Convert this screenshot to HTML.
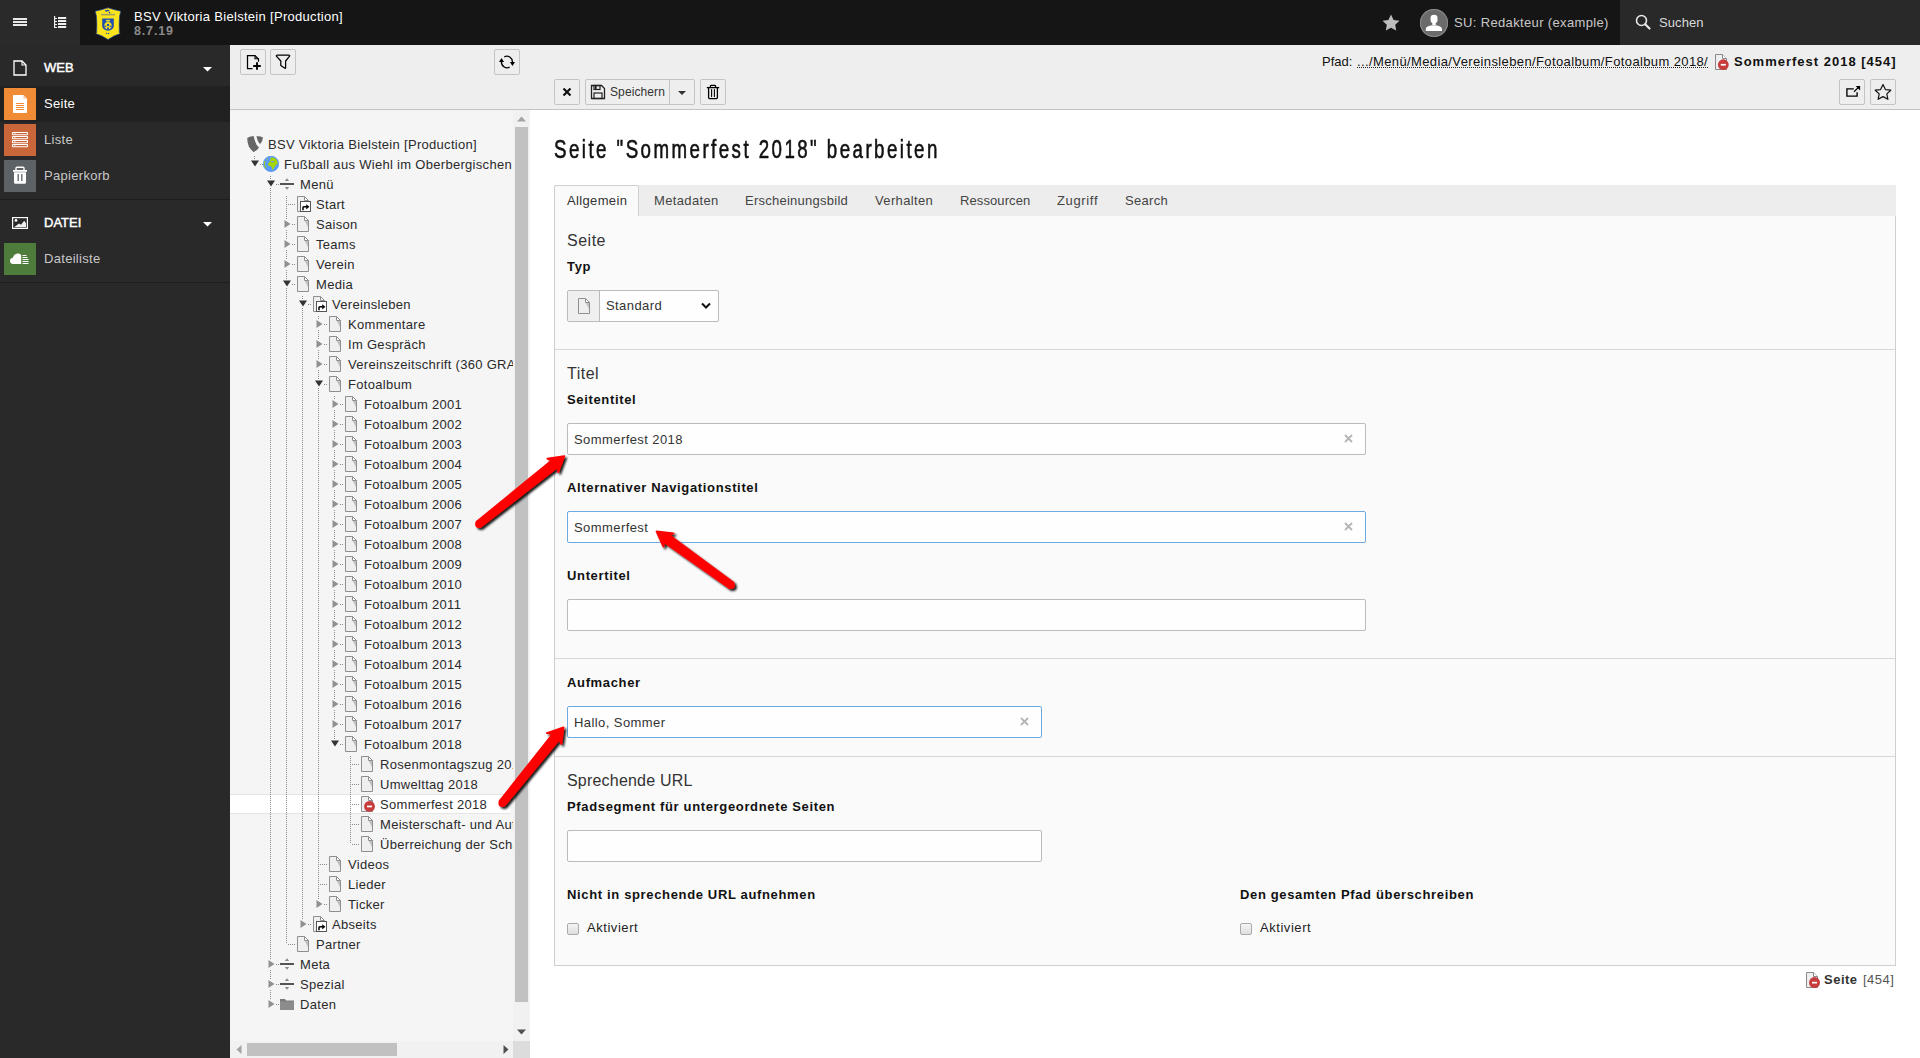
<!DOCTYPE html><html><head><meta charset="utf-8"><title>TYPO3</title><style>
*{box-sizing:border-box}
html,body{margin:0;padding:0;width:1920px;height:1058px;overflow:hidden;background:#fff;font-family:"Liberation Sans", sans-serif;color:#212121}
.abs{position:absolute}
.t{position:absolute;white-space:nowrap;line-height:1}
.btn{position:absolute;background:#eeeeee;border:1px solid #c4c4c4;border-radius:2px}
.dv{position:absolute;width:1px;background-image:linear-gradient(#8a8a8a 50%,transparent 50%);background-size:1px 2px}
.dh{position:absolute;height:1px;background-image:linear-gradient(90deg,#8a8a8a 50%,transparent 50%);background-size:2px 1px}
.tr{position:absolute;white-space:nowrap;font-size:13px;letter-spacing:0.3px;line-height:20px;height:20px;color:#2a2a2a}
.lbl{position:absolute;white-space:nowrap;font-size:13px;font-weight:bold;letter-spacing:0.65px;margin-top:-1px;color:#111;line-height:1}
.inp{position:absolute;background:#fefefe;border:1px solid #bbb;border-radius:2px}
.inp.blue{border-color:#6daae0}
.itx{position:absolute;white-space:nowrap;font-size:13px;letter-spacing:0.42px;color:#333;line-height:1}
.clr{position:absolute;width:9px;height:9px}
.sec{position:absolute;white-space:nowrap;font-size:16px;letter-spacing:0.5px;color:#333;line-height:1}

</style></head><body>
<div class="abs" style="left:0;top:0;width:1920px;height:45px;background:#151515"></div>
<div class="abs" style="left:0;top:0;width:80px;height:45px;background:#2a2a2a"></div>
<div class="abs" style="left:13px;top:18px;width:14px;height:2px;background:#e8e8e8"></div>
<div class="abs" style="left:13px;top:21px;width:14px;height:2px;background:#e8e8e8"></div>
<div class="abs" style="left:13px;top:24px;width:14px;height:2px;background:#e8e8e8"></div>
<svg class="abs" style="left:50px;top:12px" width="20" height="20" viewBox="0 0 20 20"><g fill="#f0f0f0"><rect x="4" y="4" width="1.2" height="12"/><rect x="5" y="6" width="2" height="1"/><rect x="5" y="9" width="2" height="1"/><rect x="5" y="12" width="2" height="1"/><rect x="5" y="15" width="2" height="1"/><rect x="8" y="5" width="8.2" height="2"/><rect x="8" y="8" width="8.2" height="2"/><rect x="8" y="11" width="8.2" height="2"/><rect x="8" y="14" width="8.2" height="2"/></g></svg>
<svg class="abs" style="left:90px;top:4px" width="36" height="38" viewBox="0 0 36 38"><path d="M5.2 7.2L12 5.6 18 3.8 24 5.6 30.8 7.2 29.6 12 29.2 20 29.4 28.6 30.2 29.6 24 32 18 35.6 12 32 5.8 29.6 6.6 28.6 6.8 20 6.4 12Z" fill="#fce51c" stroke="#1c3f96" stroke-width="0.7"/><path d="M11 10.6h14" stroke="#a8a060" stroke-width="1.6"/><path d="M15 6.6l1.6 .4 1.2-.8 1.4.6M19.4 8.6" stroke="#1f4fb0" stroke-width="1.3" fill="none"/><circle cx="19.5" cy="8.6" r="0.8" fill="#1f4fb0"/><path d="M12.2 14.6L23.8 14.6 23.8 22C23.8 24.6 21 26.2 18 26.8 15 26.2 12.2 24.6 12.2 22Z" fill="#1f4fb0"/><path d="M16 15.2l.8 1.4 1.2-1.2 1.2 1.2.8-1.4v2.2h-4z" fill="#fce51c"/><circle cx="18" cy="21.6" r="3.6" fill="#fce51c"/><circle cx="18" cy="21" r="1.2" fill="#1f4fb0"/><circle cx="18" cy="24.2" r="1" fill="#1f4fb0"/><circle cx="15.6" cy="22.2" r="0.8" fill="#1f4fb0"/><circle cx="20.4" cy="22.2" r="0.8" fill="#1f4fb0"/><circle cx="16.6" cy="29.4" r="0.7" fill="#1f4fb0"/><circle cx="18.6" cy="29.4" r="0.7" fill="#1f4fb0"/></svg>
<div class="t" style="left:134px;top:10px;font-size:13px;letter-spacing:0.3px;color:#fff">BSV Viktoria Bielstein [Production]</div>
<div class="t" style="left:134px;top:25px;font-size:12.5px;letter-spacing:0.85px;color:#8a8a8a;font-weight:bold">8.7.19</div>
<svg class="abs" style="left:1382px;top:14px" width="18" height="17" viewBox="0 0 18 17"><path d="M9 0.5l2.6 5.4 5.9.8-4.3 4.1 1 5.8L9 13.8 3.8 16.6l1-5.8L.5 6.7l5.9-.8z" fill="#bdbdbd"/></svg>
<div class="abs" style="left:1420px;top:9px;width:28px;height:28px;border-radius:50%;background:#6b6b6b;box-shadow:inset 0 0 0 1px #8a8a8a;overflow:hidden"><svg width="28" height="28" viewBox="0 0 28 28"><path d="M10.6 9Q10.6 5.8 14 5.8Q17.5 5.8 17.5 9V11Q17.5 14.2 14 14.2Q10.6 14.2 10.6 11Z" fill="#fff"/><rect x="12.3" y="13.4" width="3.4" height="3.2" fill="#fff"/><path d="M5.8 21.9V20Q5.8 17.8 9 17L12 16.3Q14 17.6 16 16.3L19 17Q22 17.8 22 20V21.9Z" fill="#fff"/></svg></div>
<div class="t" style="left:1454px;top:16px;font-size:13px;letter-spacing:0.35px;color:#c8c8c8">SU: Redakteur (example)</div>
<div class="abs" style="left:1620px;top:0;width:300px;height:45px;background:#292929"></div>
<svg class="abs" style="left:1635px;top:14px" width="16" height="16" viewBox="0 0 16 16"><circle cx="6.5" cy="6.5" r="5" fill="none" stroke="#e8e8e8" stroke-width="1.6"/><path d="M10.2 10.2l4.3 4.3" stroke="#e8e8e8" stroke-width="2.2" stroke-linecap="round"/></svg>
<div class="t" style="left:1659px;top:16px;font-size:13px;letter-spacing:0.1px;color:#dadada">Suchen</div>
<div class="abs" style="left:0;top:45px;width:230px;height:1013px;background:#292929"></div>
<svg class="abs" style="left:13px;top:60px" width="14" height="16" viewBox="0 0 14 16"><path d="M1 1h8l4 4v10H1z" fill="none" stroke="#fff" stroke-width="1.3"/><path d="M9 1v4h4" fill="none" stroke="#fff" stroke-width="1.1"/></svg>
<div class="t" style="left:44px;top:61px;font-size:13px;color:#fff;-webkit-text-stroke:0.45px #fff">WEB</div>
<svg class="abs" style="left:203px;top:67px" width="9" height="5" viewBox="0 0 9 5"><path d="M0 0h9L4.5 4.5z" fill="#fff"/></svg>
<div class="abs" style="left:0;top:86px;width:230px;height:36px;background:#212121"></div>
<div class="abs" style="left:4px;top:88px;width:32px;height:32px;background:#f28b36"><svg width="32" height="32" viewBox="0 0 32 32"><path d="M9 7h10.5l3.5 3.5V25H9z" fill="#fff"/><path d="M19.5 7v3.5H23z" fill="#f7c49a"/><path d="M12 15.5h8M12 17.5h8M12 19.5h8M12 21.5h8" stroke="#f28b36" stroke-width="1"/></svg></div>
<div class="t" style="left:44px;top:97px;font-size:13px;color:#fff;letter-spacing:0.3px">Seite</div>
<div class="abs" style="left:4px;top:124px;width:32px;height:32px;background:#c9663a"><svg width="32" height="32" viewBox="0 0 32 32"><g fill="none" stroke="#fff" stroke-width="1.1"><rect x="8.5" y="8.5" width="15" height="2.2" rx="0.5"/><rect x="8.5" y="12.5" width="15" height="2.2" rx="0.5"/><rect x="8.5" y="16.5" width="15" height="2.2" rx="0.5"/><rect x="8.5" y="20.5" width="15" height="2.2" rx="0.5"/></g><path d="M10.5 9.6h.8M10.5 13.6h.8M10.5 17.6h.8M10.5 21.6h.8" stroke="#fff" stroke-width="1.2"/></svg></div>
<div class="t" style="left:44px;top:133px;font-size:13px;color:#c8c8c8;letter-spacing:0.3px">Liste</div>
<div class="abs" style="left:4px;top:160px;width:32px;height:32px;background:#5c6265"><svg width="32" height="32" viewBox="0 0 32 32"><path d="M12 10.5v-2.2q0-1 1-1h6q1 0 1 1v2.2" fill="none" stroke="#fff" stroke-width="1.4"/><rect x="9" y="10" width="14" height="1.8" fill="#fff"/><path d="M10 12.2h12V22.5q0 1.3-1.3 1.3h-9.4q-1.3 0-1.3-1.3z" fill="#fff"/><path d="M14.2 14v7M17.8 14v7" stroke="#5c6265" stroke-width="1.3"/></svg></div>
<div class="t" style="left:44px;top:169px;font-size:13px;color:#c8c8c8;letter-spacing:0.3px">Papierkorb</div>
<div class="abs" style="left:0;top:199px;width:230px;height:1px;background:#1e1e1e"></div>
<svg class="abs" style="left:12px;top:217px" width="16" height="12" viewBox="0 0 16 12"><rect x="0.6" y="0.6" width="14.8" height="10.8" fill="none" stroke="#fff" stroke-width="1.2"/><path d="M2 10.2L7 6.5 9 7.8 12.2 3.8 14 6.2V10.2z" fill="#eee"/><circle cx="4" cy="3.4" r="1.4" fill="#fff"/></svg>
<div class="t" style="left:44px;top:216px;font-size:13px;color:#fff;-webkit-text-stroke:0.45px #fff">DATEI</div>
<svg class="abs" style="left:203px;top:222px" width="9" height="5" viewBox="0 0 9 5"><path d="M0 0h9L4.5 4.5z" fill="#fff"/></svg>
<div class="abs" style="left:4px;top:243px;width:32px;height:32px;background:#4e7d3b"><svg width="32" height="32" viewBox="0 0 32 32" style="margin-top:-1.5px"><path d="M9 22c-2 0-3-1.6-3-3.2 0-1.8 1.4-3 3-3 .4-2.6 2.4-4.3 4.8-4.3 1.6 0 2.8.7 3.4 1.6V22z" fill="#fff"/><path d="M18.5 13.5h4M18.5 15.5h5M18.5 17.5h6M18.5 19.5h6M18.5 21.5h6" stroke="#fff" stroke-width="1"/></svg></div>
<div class="t" style="left:44px;top:252px;font-size:13px;color:#c8c8c8;letter-spacing:0.3px">Dateiliste</div>
<div class="abs" style="left:0;top:282px;width:230px;height:1px;background:#1e1e1e"></div>
<div class="abs" style="left:230px;top:45px;width:300px;height:64px;background:#eeeeee;border-bottom:1px solid #c3c3c3;height:65px"></div>
<div class="btn" style="left:240px;top:49px;width:26px;height:26px"><svg width="24" height="24" viewBox="0 0 24 24" style="position:absolute;left:0;top:0"><path d="M11.5 18.5H6.5V5.5H14L17.5 9V11.8" fill="none" stroke="#000" stroke-width="1.25"/><path d="M14 5.5V8.8H17.5" fill="none" stroke="#000" stroke-width="1.1"/><path d="M16 12.2V19.8M12.2 16H19.8" stroke="#000" stroke-width="1.9"/></svg></div>
<div class="btn" style="left:270px;top:49px;width:26px;height:26px"><svg width="24" height="24" viewBox="0 0 24 24" style="position:absolute;left:0;top:0"><path d="M5.4 6.1Q5 5.2 6.2 5.2H17.8Q19 5.2 18.6 6.1L14.6 11V17.8Q14.6 18.6 13.9 18.2L9.8 15.4V11Z" fill="none" stroke="#000" stroke-width="1.25" stroke-linejoin="round"/></svg></div>
<div class="btn" style="left:494px;top:49px;width:26px;height:26px"><svg width="24" height="24" viewBox="0 0 24 24" style="position:absolute;left:0;top:0"><path d="M9.3 6.8A5.6 5.6 0 0 1 17.4 12.4" fill="none" stroke="#000" stroke-width="1.35"/><path d="M14.9 12.1H20L17.45 16Z" fill="#000"/><path d="M14.6 17.2A5.6 5.6 0 0 1 6.5 11.6" fill="none" stroke="#000" stroke-width="1.35"/><path d="M4 11.9H9L6.5 8Z" fill="#000"/></svg></div>
<div class="abs" style="left:230px;top:110px;width:283px;height:931px;background:#f5f5f5;overflow:hidden">
<div class="abs" style="left:0;top:684px;width:280px;height:20px;background:#fff;border-top:1px solid #e5e5e5;border-bottom:1px solid #e5e5e5"></div>
<div class="dv" style="left:24px;top:46px;height:8px"></div>
<div class="dh" style="left:26px;top:54px;width:8px"></div>
<div class="dv" style="left:40px;top:66px;height:18px"></div>
<div class="dh" style="left:42px;top:74px;width:8px"></div>
<div class="dv" style="left:56px;top:86px;height:18px"></div>
<div class="dh" style="left:58px;top:94px;width:8px"></div>
<div class="dv" style="left:40px;top:84px;height:20px"></div>
<div class="dv" style="left:56px;top:104px;height:20px"></div>
<div class="dh" style="left:58px;top:114px;width:8px"></div>
<div class="dv" style="left:40px;top:104px;height:20px"></div>
<div class="dv" style="left:56px;top:124px;height:20px"></div>
<div class="dh" style="left:58px;top:134px;width:8px"></div>
<div class="dv" style="left:40px;top:124px;height:20px"></div>
<div class="dv" style="left:56px;top:144px;height:20px"></div>
<div class="dh" style="left:58px;top:154px;width:8px"></div>
<div class="dv" style="left:40px;top:144px;height:20px"></div>
<div class="dv" style="left:56px;top:164px;height:20px"></div>
<div class="dh" style="left:58px;top:174px;width:8px"></div>
<div class="dv" style="left:40px;top:164px;height:20px"></div>
<div class="dv" style="left:72px;top:186px;height:18px"></div>
<div class="dh" style="left:74px;top:194px;width:8px"></div>
<div class="dv" style="left:56px;top:184px;height:20px"></div>
<div class="dv" style="left:40px;top:184px;height:20px"></div>
<div class="dv" style="left:88px;top:206px;height:18px"></div>
<div class="dh" style="left:90px;top:214px;width:8px"></div>
<div class="dv" style="left:72px;top:204px;height:20px"></div>
<div class="dv" style="left:56px;top:204px;height:20px"></div>
<div class="dv" style="left:40px;top:204px;height:20px"></div>
<div class="dv" style="left:88px;top:224px;height:20px"></div>
<div class="dh" style="left:90px;top:234px;width:8px"></div>
<div class="dv" style="left:72px;top:224px;height:20px"></div>
<div class="dv" style="left:56px;top:224px;height:20px"></div>
<div class="dv" style="left:40px;top:224px;height:20px"></div>
<div class="dv" style="left:88px;top:244px;height:20px"></div>
<div class="dh" style="left:90px;top:254px;width:8px"></div>
<div class="dv" style="left:72px;top:244px;height:20px"></div>
<div class="dv" style="left:56px;top:244px;height:20px"></div>
<div class="dv" style="left:40px;top:244px;height:20px"></div>
<div class="dv" style="left:88px;top:264px;height:20px"></div>
<div class="dh" style="left:90px;top:274px;width:8px"></div>
<div class="dv" style="left:72px;top:264px;height:20px"></div>
<div class="dv" style="left:56px;top:264px;height:20px"></div>
<div class="dv" style="left:40px;top:264px;height:20px"></div>
<div class="dv" style="left:104px;top:286px;height:18px"></div>
<div class="dh" style="left:106px;top:294px;width:8px"></div>
<div class="dv" style="left:88px;top:284px;height:20px"></div>
<div class="dv" style="left:72px;top:284px;height:20px"></div>
<div class="dv" style="left:56px;top:284px;height:20px"></div>
<div class="dv" style="left:40px;top:284px;height:20px"></div>
<div class="dv" style="left:104px;top:304px;height:20px"></div>
<div class="dh" style="left:106px;top:314px;width:8px"></div>
<div class="dv" style="left:88px;top:304px;height:20px"></div>
<div class="dv" style="left:72px;top:304px;height:20px"></div>
<div class="dv" style="left:56px;top:304px;height:20px"></div>
<div class="dv" style="left:40px;top:304px;height:20px"></div>
<div class="dv" style="left:104px;top:324px;height:20px"></div>
<div class="dh" style="left:106px;top:334px;width:8px"></div>
<div class="dv" style="left:88px;top:324px;height:20px"></div>
<div class="dv" style="left:72px;top:324px;height:20px"></div>
<div class="dv" style="left:56px;top:324px;height:20px"></div>
<div class="dv" style="left:40px;top:324px;height:20px"></div>
<div class="dv" style="left:104px;top:344px;height:20px"></div>
<div class="dh" style="left:106px;top:354px;width:8px"></div>
<div class="dv" style="left:88px;top:344px;height:20px"></div>
<div class="dv" style="left:72px;top:344px;height:20px"></div>
<div class="dv" style="left:56px;top:344px;height:20px"></div>
<div class="dv" style="left:40px;top:344px;height:20px"></div>
<div class="dv" style="left:104px;top:364px;height:20px"></div>
<div class="dh" style="left:106px;top:374px;width:8px"></div>
<div class="dv" style="left:88px;top:364px;height:20px"></div>
<div class="dv" style="left:72px;top:364px;height:20px"></div>
<div class="dv" style="left:56px;top:364px;height:20px"></div>
<div class="dv" style="left:40px;top:364px;height:20px"></div>
<div class="dv" style="left:104px;top:384px;height:20px"></div>
<div class="dh" style="left:106px;top:394px;width:8px"></div>
<div class="dv" style="left:88px;top:384px;height:20px"></div>
<div class="dv" style="left:72px;top:384px;height:20px"></div>
<div class="dv" style="left:56px;top:384px;height:20px"></div>
<div class="dv" style="left:40px;top:384px;height:20px"></div>
<div class="dv" style="left:104px;top:404px;height:20px"></div>
<div class="dh" style="left:106px;top:414px;width:8px"></div>
<div class="dv" style="left:88px;top:404px;height:20px"></div>
<div class="dv" style="left:72px;top:404px;height:20px"></div>
<div class="dv" style="left:56px;top:404px;height:20px"></div>
<div class="dv" style="left:40px;top:404px;height:20px"></div>
<div class="dv" style="left:104px;top:424px;height:20px"></div>
<div class="dh" style="left:106px;top:434px;width:8px"></div>
<div class="dv" style="left:88px;top:424px;height:20px"></div>
<div class="dv" style="left:72px;top:424px;height:20px"></div>
<div class="dv" style="left:56px;top:424px;height:20px"></div>
<div class="dv" style="left:40px;top:424px;height:20px"></div>
<div class="dv" style="left:104px;top:444px;height:20px"></div>
<div class="dh" style="left:106px;top:454px;width:8px"></div>
<div class="dv" style="left:88px;top:444px;height:20px"></div>
<div class="dv" style="left:72px;top:444px;height:20px"></div>
<div class="dv" style="left:56px;top:444px;height:20px"></div>
<div class="dv" style="left:40px;top:444px;height:20px"></div>
<div class="dv" style="left:104px;top:464px;height:20px"></div>
<div class="dh" style="left:106px;top:474px;width:8px"></div>
<div class="dv" style="left:88px;top:464px;height:20px"></div>
<div class="dv" style="left:72px;top:464px;height:20px"></div>
<div class="dv" style="left:56px;top:464px;height:20px"></div>
<div class="dv" style="left:40px;top:464px;height:20px"></div>
<div class="dv" style="left:104px;top:484px;height:20px"></div>
<div class="dh" style="left:106px;top:494px;width:8px"></div>
<div class="dv" style="left:88px;top:484px;height:20px"></div>
<div class="dv" style="left:72px;top:484px;height:20px"></div>
<div class="dv" style="left:56px;top:484px;height:20px"></div>
<div class="dv" style="left:40px;top:484px;height:20px"></div>
<div class="dv" style="left:104px;top:504px;height:20px"></div>
<div class="dh" style="left:106px;top:514px;width:8px"></div>
<div class="dv" style="left:88px;top:504px;height:20px"></div>
<div class="dv" style="left:72px;top:504px;height:20px"></div>
<div class="dv" style="left:56px;top:504px;height:20px"></div>
<div class="dv" style="left:40px;top:504px;height:20px"></div>
<div class="dv" style="left:104px;top:524px;height:20px"></div>
<div class="dh" style="left:106px;top:534px;width:8px"></div>
<div class="dv" style="left:88px;top:524px;height:20px"></div>
<div class="dv" style="left:72px;top:524px;height:20px"></div>
<div class="dv" style="left:56px;top:524px;height:20px"></div>
<div class="dv" style="left:40px;top:524px;height:20px"></div>
<div class="dv" style="left:104px;top:544px;height:20px"></div>
<div class="dh" style="left:106px;top:554px;width:8px"></div>
<div class="dv" style="left:88px;top:544px;height:20px"></div>
<div class="dv" style="left:72px;top:544px;height:20px"></div>
<div class="dv" style="left:56px;top:544px;height:20px"></div>
<div class="dv" style="left:40px;top:544px;height:20px"></div>
<div class="dv" style="left:104px;top:564px;height:20px"></div>
<div class="dh" style="left:106px;top:574px;width:8px"></div>
<div class="dv" style="left:88px;top:564px;height:20px"></div>
<div class="dv" style="left:72px;top:564px;height:20px"></div>
<div class="dv" style="left:56px;top:564px;height:20px"></div>
<div class="dv" style="left:40px;top:564px;height:20px"></div>
<div class="dv" style="left:104px;top:584px;height:20px"></div>
<div class="dh" style="left:106px;top:594px;width:8px"></div>
<div class="dv" style="left:88px;top:584px;height:20px"></div>
<div class="dv" style="left:72px;top:584px;height:20px"></div>
<div class="dv" style="left:56px;top:584px;height:20px"></div>
<div class="dv" style="left:40px;top:584px;height:20px"></div>
<div class="dv" style="left:104px;top:604px;height:20px"></div>
<div class="dh" style="left:106px;top:614px;width:8px"></div>
<div class="dv" style="left:88px;top:604px;height:20px"></div>
<div class="dv" style="left:72px;top:604px;height:20px"></div>
<div class="dv" style="left:56px;top:604px;height:20px"></div>
<div class="dv" style="left:40px;top:604px;height:20px"></div>
<div class="dv" style="left:104px;top:624px;height:10px"></div>
<div class="dh" style="left:106px;top:634px;width:8px"></div>
<div class="dv" style="left:88px;top:624px;height:20px"></div>
<div class="dv" style="left:72px;top:624px;height:20px"></div>
<div class="dv" style="left:56px;top:624px;height:20px"></div>
<div class="dv" style="left:40px;top:624px;height:20px"></div>
<div class="dv" style="left:120px;top:646px;height:18px"></div>
<div class="dh" style="left:122px;top:654px;width:8px"></div>
<div class="dv" style="left:88px;top:644px;height:20px"></div>
<div class="dv" style="left:72px;top:644px;height:20px"></div>
<div class="dv" style="left:56px;top:644px;height:20px"></div>
<div class="dv" style="left:40px;top:644px;height:20px"></div>
<div class="dv" style="left:120px;top:664px;height:20px"></div>
<div class="dh" style="left:122px;top:674px;width:8px"></div>
<div class="dv" style="left:88px;top:664px;height:20px"></div>
<div class="dv" style="left:72px;top:664px;height:20px"></div>
<div class="dv" style="left:56px;top:664px;height:20px"></div>
<div class="dv" style="left:40px;top:664px;height:20px"></div>
<div class="dv" style="left:120px;top:684px;height:20px"></div>
<div class="dh" style="left:122px;top:694px;width:8px"></div>
<div class="dv" style="left:88px;top:684px;height:20px"></div>
<div class="dv" style="left:72px;top:684px;height:20px"></div>
<div class="dv" style="left:56px;top:684px;height:20px"></div>
<div class="dv" style="left:40px;top:684px;height:20px"></div>
<div class="dv" style="left:120px;top:704px;height:20px"></div>
<div class="dh" style="left:122px;top:714px;width:8px"></div>
<div class="dv" style="left:88px;top:704px;height:20px"></div>
<div class="dv" style="left:72px;top:704px;height:20px"></div>
<div class="dv" style="left:56px;top:704px;height:20px"></div>
<div class="dv" style="left:40px;top:704px;height:20px"></div>
<div class="dv" style="left:120px;top:724px;height:10px"></div>
<div class="dh" style="left:122px;top:734px;width:8px"></div>
<div class="dv" style="left:88px;top:724px;height:20px"></div>
<div class="dv" style="left:72px;top:724px;height:20px"></div>
<div class="dv" style="left:56px;top:724px;height:20px"></div>
<div class="dv" style="left:40px;top:724px;height:20px"></div>
<div class="dv" style="left:88px;top:744px;height:20px"></div>
<div class="dh" style="left:90px;top:754px;width:8px"></div>
<div class="dv" style="left:72px;top:744px;height:20px"></div>
<div class="dv" style="left:56px;top:744px;height:20px"></div>
<div class="dv" style="left:40px;top:744px;height:20px"></div>
<div class="dv" style="left:88px;top:764px;height:20px"></div>
<div class="dh" style="left:90px;top:774px;width:8px"></div>
<div class="dv" style="left:72px;top:764px;height:20px"></div>
<div class="dv" style="left:56px;top:764px;height:20px"></div>
<div class="dv" style="left:40px;top:764px;height:20px"></div>
<div class="dv" style="left:88px;top:784px;height:10px"></div>
<div class="dh" style="left:90px;top:794px;width:8px"></div>
<div class="dv" style="left:72px;top:784px;height:20px"></div>
<div class="dv" style="left:56px;top:784px;height:20px"></div>
<div class="dv" style="left:40px;top:784px;height:20px"></div>
<div class="dv" style="left:72px;top:804px;height:10px"></div>
<div class="dh" style="left:74px;top:814px;width:8px"></div>
<div class="dv" style="left:56px;top:804px;height:20px"></div>
<div class="dv" style="left:40px;top:804px;height:20px"></div>
<div class="dv" style="left:56px;top:824px;height:10px"></div>
<div class="dh" style="left:58px;top:834px;width:8px"></div>
<div class="dv" style="left:40px;top:824px;height:20px"></div>
<div class="dv" style="left:40px;top:844px;height:20px"></div>
<div class="dh" style="left:42px;top:854px;width:8px"></div>
<div class="dv" style="left:40px;top:864px;height:20px"></div>
<div class="dh" style="left:42px;top:874px;width:8px"></div>
<div class="dv" style="left:40px;top:884px;height:10px"></div>
<div class="dh" style="left:42px;top:894px;width:8px"></div>
<svg width="18" height="18" viewBox="0 0 18 18" style="position:absolute;left:16px;top:25px"><path d="M1.2 3Q3 1.4 7.6 1.1Q8.6 6 10.5 9.7L13 12.4Q10.5 16.5 7.4 17Q4.5 14.5 2.8 11.5Q1.2 7.5 1.2 3Z" fill="#666"/><path d="M10.4 1.2Q14.5 0.9 17 2.4Q16.6 6.6 14.1 9.3Q11.4 6.6 10.4 1.2Z" fill="#666"/></svg>
<div class="tr" style="left:38px;top:25px">BSV Viktoria Bielstein [Production]</div>
<svg width="16" height="16" viewBox="0 0 16 16" style="position:absolute;left:33px;top:46px"><circle cx="8" cy="7.9" r="7.7" fill="#5a9cff" stroke="#3f7fe6" stroke-width="0.6"/><path d="M7.8 1.6Q10.5 1.2 13 3Q14.8 5 14.6 9L13.4 8Q12.5 10 11.2 11.5Q10.5 13 9.8 14.6Q9 13 8.8 11.5Q8.5 10.5 7.5 10Q5.2 10 5 8.5Q5 6.8 6.3 6.5Q6.5 5 7.3 4.2Z" fill="#a8d400"/><ellipse cx="9.6" cy="5.7" rx="1.8" ry="0.6" fill="#5a9cff"/><path d="M1.2 5.2Q2 4.4 2.5 5.4L1.8 8.4Q2.4 10.4 3.6 11.4L3 12.4Q1.4 11 1.1 9Z" fill="#a8d400"/><circle cx="4.4" cy="2.9" r="0.7" fill="#a8d400"/></svg>
<div class="abs" style="left:21px;top:49px;width:9px;height:9px;background:#f5f5f5"></div>
<svg class="abs" style="left:21px;top:50px" width="8" height="7" viewBox="0 0 8 7"><path d="M0 0.5h8L4 6.5z" fill="#333"/></svg>
<div class="tr" style="left:54px;top:45px">Fußball aus Wiehl im Oberbergischen</div>
<svg width="16" height="16" viewBox="0 0 16 16" style="position:absolute;left:49px;top:66px"><rect x="1" y="7" width="14" height="2" fill="#555"/><path d="M5.8 5h4.4L8 2.2z" fill="#8a8a8a"/><path d="M5.8 11h4.4L8 13.8z" fill="#8a8a8a"/></svg>
<div class="abs" style="left:37px;top:69px;width:9px;height:9px;background:#f5f5f5"></div>
<svg class="abs" style="left:37px;top:70px" width="8" height="7" viewBox="0 0 8 7"><path d="M0 0.5h8L4 6.5z" fill="#333"/></svg>
<div class="tr" style="left:70px;top:65px">Menü</div>
<svg width="16" height="16" viewBox="0 0 16 16" style="overflow:visible;position:absolute;left:65px;top:86px"><path d="M2.5 0.5h7l4 4v11h-11z" fill="#efefef" stroke="#8f8f8f"/><path d="M9.8 5H13V11z" fill="#c2c2c2"/><path d="M9.5 0.5v4h4z" fill="#fff" stroke="#8f8f8f" stroke-linejoin="round"/><rect x="5.5" y="5.5" width="10" height="10" fill="#fff" stroke="#555"/><path d="M8 14.2v-2.6q0-.9.9-.9h2.6" fill="none" stroke="#000" stroke-width="1.5"/><path d="M11.2 8.3l3.2 2.5-3.2 2.6z" fill="#000"/></svg>
<div class="tr" style="left:86px;top:85px">Start</div>
<svg width="16" height="16" viewBox="0 0 16 16" style="overflow:visible;position:absolute;left:65px;top:106px"><path d="M2.5 0.5h7l4 4v11h-11z" fill="#efefef" stroke="#8f8f8f"/><path d="M9.8 5H13V11z" fill="#c2c2c2"/><path d="M9.5 0.5v4h4z" fill="#fff" stroke="#8f8f8f" stroke-linejoin="round"/></svg>
<div class="abs" style="left:54px;top:110px;width:8px;height:9px;background:#f5f5f5"></div>
<svg class="abs" style="left:54px;top:110px" width="7" height="8" viewBox="0 0 7 8"><path d="M0.5 0v8L6.5 4z" fill="#909090"/></svg>
<div class="tr" style="left:86px;top:105px">Saison</div>
<svg width="16" height="16" viewBox="0 0 16 16" style="overflow:visible;position:absolute;left:65px;top:126px"><path d="M2.5 0.5h7l4 4v11h-11z" fill="#efefef" stroke="#8f8f8f"/><path d="M9.8 5H13V11z" fill="#c2c2c2"/><path d="M9.5 0.5v4h4z" fill="#fff" stroke="#8f8f8f" stroke-linejoin="round"/></svg>
<div class="abs" style="left:54px;top:130px;width:8px;height:9px;background:#f5f5f5"></div>
<svg class="abs" style="left:54px;top:130px" width="7" height="8" viewBox="0 0 7 8"><path d="M0.5 0v8L6.5 4z" fill="#909090"/></svg>
<div class="tr" style="left:86px;top:125px">Teams</div>
<svg width="16" height="16" viewBox="0 0 16 16" style="overflow:visible;position:absolute;left:65px;top:146px"><path d="M2.5 0.5h7l4 4v11h-11z" fill="#efefef" stroke="#8f8f8f"/><path d="M9.8 5H13V11z" fill="#c2c2c2"/><path d="M9.5 0.5v4h4z" fill="#fff" stroke="#8f8f8f" stroke-linejoin="round"/></svg>
<div class="abs" style="left:54px;top:150px;width:8px;height:9px;background:#f5f5f5"></div>
<svg class="abs" style="left:54px;top:150px" width="7" height="8" viewBox="0 0 7 8"><path d="M0.5 0v8L6.5 4z" fill="#909090"/></svg>
<div class="tr" style="left:86px;top:145px">Verein</div>
<svg width="16" height="16" viewBox="0 0 16 16" style="overflow:visible;position:absolute;left:65px;top:166px"><path d="M2.5 0.5h7l4 4v11h-11z" fill="#efefef" stroke="#8f8f8f"/><path d="M9.8 5H13V11z" fill="#c2c2c2"/><path d="M9.5 0.5v4h4z" fill="#fff" stroke="#8f8f8f" stroke-linejoin="round"/></svg>
<div class="abs" style="left:53px;top:169px;width:9px;height:9px;background:#f5f5f5"></div>
<svg class="abs" style="left:53px;top:170px" width="8" height="7" viewBox="0 0 8 7"><path d="M0 0.5h8L4 6.5z" fill="#333"/></svg>
<div class="tr" style="left:86px;top:165px">Media</div>
<svg width="16" height="16" viewBox="0 0 16 16" style="overflow:visible;position:absolute;left:81px;top:186px"><path d="M2.5 0.5h7l4 4v11h-11z" fill="#efefef" stroke="#8f8f8f"/><path d="M9.8 5H13V11z" fill="#c2c2c2"/><path d="M9.5 0.5v4h4z" fill="#fff" stroke="#8f8f8f" stroke-linejoin="round"/><rect x="5.5" y="5.5" width="10" height="10" fill="#fff" stroke="#555"/><path d="M8 14.2v-2.6q0-.9.9-.9h2.6" fill="none" stroke="#000" stroke-width="1.5"/><path d="M11.2 8.3l3.2 2.5-3.2 2.6z" fill="#000"/></svg>
<div class="abs" style="left:69px;top:189px;width:9px;height:9px;background:#f5f5f5"></div>
<svg class="abs" style="left:69px;top:190px" width="8" height="7" viewBox="0 0 8 7"><path d="M0 0.5h8L4 6.5z" fill="#333"/></svg>
<div class="tr" style="left:102px;top:185px">Vereinsleben</div>
<svg width="16" height="16" viewBox="0 0 16 16" style="overflow:visible;position:absolute;left:97px;top:206px"><path d="M2.5 0.5h7l4 4v11h-11z" fill="#efefef" stroke="#8f8f8f"/><path d="M9.8 5H13V11z" fill="#c2c2c2"/><path d="M9.5 0.5v4h4z" fill="#fff" stroke="#8f8f8f" stroke-linejoin="round"/></svg>
<div class="abs" style="left:86px;top:210px;width:8px;height:9px;background:#f5f5f5"></div>
<svg class="abs" style="left:86px;top:210px" width="7" height="8" viewBox="0 0 7 8"><path d="M0.5 0v8L6.5 4z" fill="#909090"/></svg>
<div class="tr" style="left:118px;top:205px">Kommentare</div>
<svg width="16" height="16" viewBox="0 0 16 16" style="overflow:visible;position:absolute;left:97px;top:226px"><path d="M2.5 0.5h7l4 4v11h-11z" fill="#efefef" stroke="#8f8f8f"/><path d="M9.8 5H13V11z" fill="#c2c2c2"/><path d="M9.5 0.5v4h4z" fill="#fff" stroke="#8f8f8f" stroke-linejoin="round"/></svg>
<div class="abs" style="left:86px;top:230px;width:8px;height:9px;background:#f5f5f5"></div>
<svg class="abs" style="left:86px;top:230px" width="7" height="8" viewBox="0 0 7 8"><path d="M0.5 0v8L6.5 4z" fill="#909090"/></svg>
<div class="tr" style="left:118px;top:225px">Im Gespräch</div>
<svg width="16" height="16" viewBox="0 0 16 16" style="overflow:visible;position:absolute;left:97px;top:246px"><path d="M2.5 0.5h7l4 4v11h-11z" fill="#efefef" stroke="#8f8f8f"/><path d="M9.8 5H13V11z" fill="#c2c2c2"/><path d="M9.5 0.5v4h4z" fill="#fff" stroke="#8f8f8f" stroke-linejoin="round"/></svg>
<div class="abs" style="left:86px;top:250px;width:8px;height:9px;background:#f5f5f5"></div>
<svg class="abs" style="left:86px;top:250px" width="7" height="8" viewBox="0 0 7 8"><path d="M0.5 0v8L6.5 4z" fill="#909090"/></svg>
<div class="tr" style="left:118px;top:245px">Vereinszeitschrift (360 GRAD)</div>
<svg width="16" height="16" viewBox="0 0 16 16" style="overflow:visible;position:absolute;left:97px;top:266px"><path d="M2.5 0.5h7l4 4v11h-11z" fill="#efefef" stroke="#8f8f8f"/><path d="M9.8 5H13V11z" fill="#c2c2c2"/><path d="M9.5 0.5v4h4z" fill="#fff" stroke="#8f8f8f" stroke-linejoin="round"/></svg>
<div class="abs" style="left:85px;top:269px;width:9px;height:9px;background:#f5f5f5"></div>
<svg class="abs" style="left:85px;top:270px" width="8" height="7" viewBox="0 0 8 7"><path d="M0 0.5h8L4 6.5z" fill="#333"/></svg>
<div class="tr" style="left:118px;top:265px">Fotoalbum</div>
<svg width="16" height="16" viewBox="0 0 16 16" style="overflow:visible;position:absolute;left:113px;top:286px"><path d="M2.5 0.5h7l4 4v11h-11z" fill="#efefef" stroke="#8f8f8f"/><path d="M9.8 5H13V11z" fill="#c2c2c2"/><path d="M9.5 0.5v4h4z" fill="#fff" stroke="#8f8f8f" stroke-linejoin="round"/></svg>
<div class="abs" style="left:102px;top:290px;width:8px;height:9px;background:#f5f5f5"></div>
<svg class="abs" style="left:102px;top:290px" width="7" height="8" viewBox="0 0 7 8"><path d="M0.5 0v8L6.5 4z" fill="#909090"/></svg>
<div class="tr" style="left:134px;top:285px">Fotoalbum 2001</div>
<svg width="16" height="16" viewBox="0 0 16 16" style="overflow:visible;position:absolute;left:113px;top:306px"><path d="M2.5 0.5h7l4 4v11h-11z" fill="#efefef" stroke="#8f8f8f"/><path d="M9.8 5H13V11z" fill="#c2c2c2"/><path d="M9.5 0.5v4h4z" fill="#fff" stroke="#8f8f8f" stroke-linejoin="round"/></svg>
<div class="abs" style="left:102px;top:310px;width:8px;height:9px;background:#f5f5f5"></div>
<svg class="abs" style="left:102px;top:310px" width="7" height="8" viewBox="0 0 7 8"><path d="M0.5 0v8L6.5 4z" fill="#909090"/></svg>
<div class="tr" style="left:134px;top:305px">Fotoalbum 2002</div>
<svg width="16" height="16" viewBox="0 0 16 16" style="overflow:visible;position:absolute;left:113px;top:326px"><path d="M2.5 0.5h7l4 4v11h-11z" fill="#efefef" stroke="#8f8f8f"/><path d="M9.8 5H13V11z" fill="#c2c2c2"/><path d="M9.5 0.5v4h4z" fill="#fff" stroke="#8f8f8f" stroke-linejoin="round"/></svg>
<div class="abs" style="left:102px;top:330px;width:8px;height:9px;background:#f5f5f5"></div>
<svg class="abs" style="left:102px;top:330px" width="7" height="8" viewBox="0 0 7 8"><path d="M0.5 0v8L6.5 4z" fill="#909090"/></svg>
<div class="tr" style="left:134px;top:325px">Fotoalbum 2003</div>
<svg width="16" height="16" viewBox="0 0 16 16" style="overflow:visible;position:absolute;left:113px;top:346px"><path d="M2.5 0.5h7l4 4v11h-11z" fill="#efefef" stroke="#8f8f8f"/><path d="M9.8 5H13V11z" fill="#c2c2c2"/><path d="M9.5 0.5v4h4z" fill="#fff" stroke="#8f8f8f" stroke-linejoin="round"/></svg>
<div class="abs" style="left:102px;top:350px;width:8px;height:9px;background:#f5f5f5"></div>
<svg class="abs" style="left:102px;top:350px" width="7" height="8" viewBox="0 0 7 8"><path d="M0.5 0v8L6.5 4z" fill="#909090"/></svg>
<div class="tr" style="left:134px;top:345px">Fotoalbum 2004</div>
<svg width="16" height="16" viewBox="0 0 16 16" style="overflow:visible;position:absolute;left:113px;top:366px"><path d="M2.5 0.5h7l4 4v11h-11z" fill="#efefef" stroke="#8f8f8f"/><path d="M9.8 5H13V11z" fill="#c2c2c2"/><path d="M9.5 0.5v4h4z" fill="#fff" stroke="#8f8f8f" stroke-linejoin="round"/></svg>
<div class="abs" style="left:102px;top:370px;width:8px;height:9px;background:#f5f5f5"></div>
<svg class="abs" style="left:102px;top:370px" width="7" height="8" viewBox="0 0 7 8"><path d="M0.5 0v8L6.5 4z" fill="#909090"/></svg>
<div class="tr" style="left:134px;top:365px">Fotoalbum 2005</div>
<svg width="16" height="16" viewBox="0 0 16 16" style="overflow:visible;position:absolute;left:113px;top:386px"><path d="M2.5 0.5h7l4 4v11h-11z" fill="#efefef" stroke="#8f8f8f"/><path d="M9.8 5H13V11z" fill="#c2c2c2"/><path d="M9.5 0.5v4h4z" fill="#fff" stroke="#8f8f8f" stroke-linejoin="round"/></svg>
<div class="abs" style="left:102px;top:390px;width:8px;height:9px;background:#f5f5f5"></div>
<svg class="abs" style="left:102px;top:390px" width="7" height="8" viewBox="0 0 7 8"><path d="M0.5 0v8L6.5 4z" fill="#909090"/></svg>
<div class="tr" style="left:134px;top:385px">Fotoalbum 2006</div>
<svg width="16" height="16" viewBox="0 0 16 16" style="overflow:visible;position:absolute;left:113px;top:406px"><path d="M2.5 0.5h7l4 4v11h-11z" fill="#efefef" stroke="#8f8f8f"/><path d="M9.8 5H13V11z" fill="#c2c2c2"/><path d="M9.5 0.5v4h4z" fill="#fff" stroke="#8f8f8f" stroke-linejoin="round"/></svg>
<div class="abs" style="left:102px;top:410px;width:8px;height:9px;background:#f5f5f5"></div>
<svg class="abs" style="left:102px;top:410px" width="7" height="8" viewBox="0 0 7 8"><path d="M0.5 0v8L6.5 4z" fill="#909090"/></svg>
<div class="tr" style="left:134px;top:405px">Fotoalbum 2007</div>
<svg width="16" height="16" viewBox="0 0 16 16" style="overflow:visible;position:absolute;left:113px;top:426px"><path d="M2.5 0.5h7l4 4v11h-11z" fill="#efefef" stroke="#8f8f8f"/><path d="M9.8 5H13V11z" fill="#c2c2c2"/><path d="M9.5 0.5v4h4z" fill="#fff" stroke="#8f8f8f" stroke-linejoin="round"/></svg>
<div class="abs" style="left:102px;top:430px;width:8px;height:9px;background:#f5f5f5"></div>
<svg class="abs" style="left:102px;top:430px" width="7" height="8" viewBox="0 0 7 8"><path d="M0.5 0v8L6.5 4z" fill="#909090"/></svg>
<div class="tr" style="left:134px;top:425px">Fotoalbum 2008</div>
<svg width="16" height="16" viewBox="0 0 16 16" style="overflow:visible;position:absolute;left:113px;top:446px"><path d="M2.5 0.5h7l4 4v11h-11z" fill="#efefef" stroke="#8f8f8f"/><path d="M9.8 5H13V11z" fill="#c2c2c2"/><path d="M9.5 0.5v4h4z" fill="#fff" stroke="#8f8f8f" stroke-linejoin="round"/></svg>
<div class="abs" style="left:102px;top:450px;width:8px;height:9px;background:#f5f5f5"></div>
<svg class="abs" style="left:102px;top:450px" width="7" height="8" viewBox="0 0 7 8"><path d="M0.5 0v8L6.5 4z" fill="#909090"/></svg>
<div class="tr" style="left:134px;top:445px">Fotoalbum 2009</div>
<svg width="16" height="16" viewBox="0 0 16 16" style="overflow:visible;position:absolute;left:113px;top:466px"><path d="M2.5 0.5h7l4 4v11h-11z" fill="#efefef" stroke="#8f8f8f"/><path d="M9.8 5H13V11z" fill="#c2c2c2"/><path d="M9.5 0.5v4h4z" fill="#fff" stroke="#8f8f8f" stroke-linejoin="round"/></svg>
<div class="abs" style="left:102px;top:470px;width:8px;height:9px;background:#f5f5f5"></div>
<svg class="abs" style="left:102px;top:470px" width="7" height="8" viewBox="0 0 7 8"><path d="M0.5 0v8L6.5 4z" fill="#909090"/></svg>
<div class="tr" style="left:134px;top:465px">Fotoalbum 2010</div>
<svg width="16" height="16" viewBox="0 0 16 16" style="overflow:visible;position:absolute;left:113px;top:486px"><path d="M2.5 0.5h7l4 4v11h-11z" fill="#efefef" stroke="#8f8f8f"/><path d="M9.8 5H13V11z" fill="#c2c2c2"/><path d="M9.5 0.5v4h4z" fill="#fff" stroke="#8f8f8f" stroke-linejoin="round"/></svg>
<div class="abs" style="left:102px;top:490px;width:8px;height:9px;background:#f5f5f5"></div>
<svg class="abs" style="left:102px;top:490px" width="7" height="8" viewBox="0 0 7 8"><path d="M0.5 0v8L6.5 4z" fill="#909090"/></svg>
<div class="tr" style="left:134px;top:485px">Fotoalbum 2011</div>
<svg width="16" height="16" viewBox="0 0 16 16" style="overflow:visible;position:absolute;left:113px;top:506px"><path d="M2.5 0.5h7l4 4v11h-11z" fill="#efefef" stroke="#8f8f8f"/><path d="M9.8 5H13V11z" fill="#c2c2c2"/><path d="M9.5 0.5v4h4z" fill="#fff" stroke="#8f8f8f" stroke-linejoin="round"/></svg>
<div class="abs" style="left:102px;top:510px;width:8px;height:9px;background:#f5f5f5"></div>
<svg class="abs" style="left:102px;top:510px" width="7" height="8" viewBox="0 0 7 8"><path d="M0.5 0v8L6.5 4z" fill="#909090"/></svg>
<div class="tr" style="left:134px;top:505px">Fotoalbum 2012</div>
<svg width="16" height="16" viewBox="0 0 16 16" style="overflow:visible;position:absolute;left:113px;top:526px"><path d="M2.5 0.5h7l4 4v11h-11z" fill="#efefef" stroke="#8f8f8f"/><path d="M9.8 5H13V11z" fill="#c2c2c2"/><path d="M9.5 0.5v4h4z" fill="#fff" stroke="#8f8f8f" stroke-linejoin="round"/></svg>
<div class="abs" style="left:102px;top:530px;width:8px;height:9px;background:#f5f5f5"></div>
<svg class="abs" style="left:102px;top:530px" width="7" height="8" viewBox="0 0 7 8"><path d="M0.5 0v8L6.5 4z" fill="#909090"/></svg>
<div class="tr" style="left:134px;top:525px">Fotoalbum 2013</div>
<svg width="16" height="16" viewBox="0 0 16 16" style="overflow:visible;position:absolute;left:113px;top:546px"><path d="M2.5 0.5h7l4 4v11h-11z" fill="#efefef" stroke="#8f8f8f"/><path d="M9.8 5H13V11z" fill="#c2c2c2"/><path d="M9.5 0.5v4h4z" fill="#fff" stroke="#8f8f8f" stroke-linejoin="round"/></svg>
<div class="abs" style="left:102px;top:550px;width:8px;height:9px;background:#f5f5f5"></div>
<svg class="abs" style="left:102px;top:550px" width="7" height="8" viewBox="0 0 7 8"><path d="M0.5 0v8L6.5 4z" fill="#909090"/></svg>
<div class="tr" style="left:134px;top:545px">Fotoalbum 2014</div>
<svg width="16" height="16" viewBox="0 0 16 16" style="overflow:visible;position:absolute;left:113px;top:566px"><path d="M2.5 0.5h7l4 4v11h-11z" fill="#efefef" stroke="#8f8f8f"/><path d="M9.8 5H13V11z" fill="#c2c2c2"/><path d="M9.5 0.5v4h4z" fill="#fff" stroke="#8f8f8f" stroke-linejoin="round"/></svg>
<div class="abs" style="left:102px;top:570px;width:8px;height:9px;background:#f5f5f5"></div>
<svg class="abs" style="left:102px;top:570px" width="7" height="8" viewBox="0 0 7 8"><path d="M0.5 0v8L6.5 4z" fill="#909090"/></svg>
<div class="tr" style="left:134px;top:565px">Fotoalbum 2015</div>
<svg width="16" height="16" viewBox="0 0 16 16" style="overflow:visible;position:absolute;left:113px;top:586px"><path d="M2.5 0.5h7l4 4v11h-11z" fill="#efefef" stroke="#8f8f8f"/><path d="M9.8 5H13V11z" fill="#c2c2c2"/><path d="M9.5 0.5v4h4z" fill="#fff" stroke="#8f8f8f" stroke-linejoin="round"/></svg>
<div class="abs" style="left:102px;top:590px;width:8px;height:9px;background:#f5f5f5"></div>
<svg class="abs" style="left:102px;top:590px" width="7" height="8" viewBox="0 0 7 8"><path d="M0.5 0v8L6.5 4z" fill="#909090"/></svg>
<div class="tr" style="left:134px;top:585px">Fotoalbum 2016</div>
<svg width="16" height="16" viewBox="0 0 16 16" style="overflow:visible;position:absolute;left:113px;top:606px"><path d="M2.5 0.5h7l4 4v11h-11z" fill="#efefef" stroke="#8f8f8f"/><path d="M9.8 5H13V11z" fill="#c2c2c2"/><path d="M9.5 0.5v4h4z" fill="#fff" stroke="#8f8f8f" stroke-linejoin="round"/></svg>
<div class="abs" style="left:102px;top:610px;width:8px;height:9px;background:#f5f5f5"></div>
<svg class="abs" style="left:102px;top:610px" width="7" height="8" viewBox="0 0 7 8"><path d="M0.5 0v8L6.5 4z" fill="#909090"/></svg>
<div class="tr" style="left:134px;top:605px">Fotoalbum 2017</div>
<svg width="16" height="16" viewBox="0 0 16 16" style="overflow:visible;position:absolute;left:113px;top:626px"><path d="M2.5 0.5h7l4 4v11h-11z" fill="#efefef" stroke="#8f8f8f"/><path d="M9.8 5H13V11z" fill="#c2c2c2"/><path d="M9.5 0.5v4h4z" fill="#fff" stroke="#8f8f8f" stroke-linejoin="round"/></svg>
<div class="abs" style="left:101px;top:629px;width:9px;height:9px;background:#f5f5f5"></div>
<svg class="abs" style="left:101px;top:630px" width="8" height="7" viewBox="0 0 8 7"><path d="M0 0.5h8L4 6.5z" fill="#333"/></svg>
<div class="tr" style="left:134px;top:625px">Fotoalbum 2018</div>
<svg width="16" height="16" viewBox="0 0 16 16" style="overflow:visible;position:absolute;left:129px;top:646px"><path d="M2.5 0.5h7l4 4v11h-11z" fill="#efefef" stroke="#8f8f8f"/><path d="M9.8 5H13V11z" fill="#c2c2c2"/><path d="M9.5 0.5v4h4z" fill="#fff" stroke="#8f8f8f" stroke-linejoin="round"/></svg>
<div class="tr" style="left:150px;top:645px">Rosenmontagszug 2018</div>
<svg width="16" height="16" viewBox="0 0 16 16" style="overflow:visible;position:absolute;left:129px;top:666px"><path d="M2.5 0.5h7l4 4v11h-11z" fill="#efefef" stroke="#8f8f8f"/><path d="M9.8 5H13V11z" fill="#c2c2c2"/><path d="M9.5 0.5v4h4z" fill="#fff" stroke="#8f8f8f" stroke-linejoin="round"/></svg>
<div class="tr" style="left:150px;top:665px">Umwelttag 2018</div>
<svg width="16" height="16" viewBox="0 0 16 16" style="overflow:visible;position:absolute;left:129px;top:686px"><path d="M2.5 0.5h7l4 4v11h-11z" fill="#efefef" stroke="#8f8f8f"/><path d="M9.8 5H13V11z" fill="#c2c2c2"/><path d="M9.5 0.5v4h4z" fill="#fff" stroke="#8f8f8f" stroke-linejoin="round"/><circle cx="10.5" cy="10.4" r="5.4" fill="#c83c3c"/><rect x="8" y="9.6" width="5" height="1.7" fill="#fff"/></svg>
<div class="tr" style="left:150px;top:685px">Sommerfest 2018</div>
<svg width="16" height="16" viewBox="0 0 16 16" style="overflow:visible;position:absolute;left:129px;top:706px"><path d="M2.5 0.5h7l4 4v11h-11z" fill="#efefef" stroke="#8f8f8f"/><path d="M9.8 5H13V11z" fill="#c2c2c2"/><path d="M9.5 0.5v4h4z" fill="#fff" stroke="#8f8f8f" stroke-linejoin="round"/></svg>
<div class="tr" style="left:150px;top:705px">Meisterschaft- und Aufstiegsfeier</div>
<svg width="16" height="16" viewBox="0 0 16 16" style="overflow:visible;position:absolute;left:129px;top:726px"><path d="M2.5 0.5h7l4 4v11h-11z" fill="#efefef" stroke="#8f8f8f"/><path d="M9.8 5H13V11z" fill="#c2c2c2"/><path d="M9.5 0.5v4h4z" fill="#fff" stroke="#8f8f8f" stroke-linejoin="round"/></svg>
<div class="tr" style="left:150px;top:725px">Überreichung der Schale</div>
<svg width="16" height="16" viewBox="0 0 16 16" style="overflow:visible;position:absolute;left:97px;top:746px"><path d="M2.5 0.5h7l4 4v11h-11z" fill="#efefef" stroke="#8f8f8f"/><path d="M9.8 5H13V11z" fill="#c2c2c2"/><path d="M9.5 0.5v4h4z" fill="#fff" stroke="#8f8f8f" stroke-linejoin="round"/></svg>
<div class="tr" style="left:118px;top:745px">Videos</div>
<svg width="16" height="16" viewBox="0 0 16 16" style="overflow:visible;position:absolute;left:97px;top:766px"><path d="M2.5 0.5h7l4 4v11h-11z" fill="#efefef" stroke="#8f8f8f"/><path d="M9.8 5H13V11z" fill="#c2c2c2"/><path d="M9.5 0.5v4h4z" fill="#fff" stroke="#8f8f8f" stroke-linejoin="round"/></svg>
<div class="tr" style="left:118px;top:765px">Lieder</div>
<svg width="16" height="16" viewBox="0 0 16 16" style="overflow:visible;position:absolute;left:97px;top:786px"><path d="M2.5 0.5h7l4 4v11h-11z" fill="#efefef" stroke="#8f8f8f"/><path d="M9.8 5H13V11z" fill="#c2c2c2"/><path d="M9.5 0.5v4h4z" fill="#fff" stroke="#8f8f8f" stroke-linejoin="round"/></svg>
<div class="abs" style="left:86px;top:790px;width:8px;height:9px;background:#f5f5f5"></div>
<svg class="abs" style="left:86px;top:790px" width="7" height="8" viewBox="0 0 7 8"><path d="M0.5 0v8L6.5 4z" fill="#909090"/></svg>
<div class="tr" style="left:118px;top:785px">Ticker</div>
<svg width="16" height="16" viewBox="0 0 16 16" style="overflow:visible;position:absolute;left:81px;top:806px"><path d="M2.5 0.5h7l4 4v11h-11z" fill="#efefef" stroke="#8f8f8f"/><path d="M9.8 5H13V11z" fill="#c2c2c2"/><path d="M9.5 0.5v4h4z" fill="#fff" stroke="#8f8f8f" stroke-linejoin="round"/><rect x="5.5" y="5.5" width="10" height="10" fill="#fff" stroke="#555"/><path d="M8 14.2v-2.6q0-.9.9-.9h2.6" fill="none" stroke="#000" stroke-width="1.5"/><path d="M11.2 8.3l3.2 2.5-3.2 2.6z" fill="#000"/></svg>
<div class="abs" style="left:70px;top:810px;width:8px;height:9px;background:#f5f5f5"></div>
<svg class="abs" style="left:70px;top:810px" width="7" height="8" viewBox="0 0 7 8"><path d="M0.5 0v8L6.5 4z" fill="#909090"/></svg>
<div class="tr" style="left:102px;top:805px">Abseits</div>
<svg width="16" height="16" viewBox="0 0 16 16" style="overflow:visible;position:absolute;left:65px;top:826px"><path d="M2.5 0.5h7l4 4v11h-11z" fill="#efefef" stroke="#8f8f8f"/><path d="M9.8 5H13V11z" fill="#c2c2c2"/><path d="M9.5 0.5v4h4z" fill="#fff" stroke="#8f8f8f" stroke-linejoin="round"/></svg>
<div class="tr" style="left:86px;top:825px">Partner</div>
<svg width="16" height="16" viewBox="0 0 16 16" style="position:absolute;left:49px;top:846px"><rect x="1" y="7" width="14" height="2" fill="#555"/><path d="M5.8 5h4.4L8 2.2z" fill="#8a8a8a"/><path d="M5.8 11h4.4L8 13.8z" fill="#8a8a8a"/></svg>
<div class="abs" style="left:38px;top:850px;width:8px;height:9px;background:#f5f5f5"></div>
<svg class="abs" style="left:38px;top:850px" width="7" height="8" viewBox="0 0 7 8"><path d="M0.5 0v8L6.5 4z" fill="#909090"/></svg>
<div class="tr" style="left:70px;top:845px">Meta</div>
<svg width="16" height="16" viewBox="0 0 16 16" style="position:absolute;left:49px;top:866px"><rect x="1" y="7" width="14" height="2" fill="#555"/><path d="M5.8 5h4.4L8 2.2z" fill="#8a8a8a"/><path d="M5.8 11h4.4L8 13.8z" fill="#8a8a8a"/></svg>
<div class="abs" style="left:38px;top:870px;width:8px;height:9px;background:#f5f5f5"></div>
<svg class="abs" style="left:38px;top:870px" width="7" height="8" viewBox="0 0 7 8"><path d="M0.5 0v8L6.5 4z" fill="#909090"/></svg>
<div class="tr" style="left:70px;top:865px">Spezial</div>
<svg width="16" height="16" viewBox="0 0 16 16" style="position:absolute;left:49px;top:886px"><path d="M1 3h5l1 1.5h8V14H1z" fill="#7a7a7a"/><rect x="1" y="5.5" width="14" height="8.5" fill="#8c8c8c"/></svg>
<div class="abs" style="left:38px;top:890px;width:8px;height:9px;background:#f5f5f5"></div>
<svg class="abs" style="left:38px;top:890px" width="7" height="8" viewBox="0 0 7 8"><path d="M0.5 0v8L6.5 4z" fill="#909090"/></svg>
<div class="tr" style="left:70px;top:885px">Daten</div>
</div>
<div class="abs" style="left:513px;top:110px;width:17px;height:931px;background:#f1f1f1"></div>
<div class="abs" style="left:515px;top:127px;width:13px;height:875px;background:#c1c1c1"></div>
<svg class="abs" style="left:517px;top:116px" width="9" height="6" viewBox="0 0 9 6"><path d="M0 5.5h9L4.5 0.5z" fill="#a3a3a3"/></svg>
<svg class="abs" style="left:517px;top:1029px" width="9" height="6" viewBox="0 0 9 6"><path d="M0 0.5h9L4.5 5.5z" fill="#505050"/></svg>
<div class="abs" style="left:230px;top:1041px;width:283px;height:17px;background:#f1f1f1"></div>
<div class="abs" style="left:247px;top:1043px;width:150px;height:13px;background:#c1c1c1"></div>
<div class="abs" style="left:513px;top:1041px;width:17px;height:17px;background:#dcdcdc"></div>
<svg class="abs" style="left:236px;top:1045px" width="6" height="9" viewBox="0 0 6 9"><path d="M5.5 0v9L0.5 4.5z" fill="#a3a3a3"/></svg>
<svg class="abs" style="left:503px;top:1045px" width="6" height="9" viewBox="0 0 6 9"><path d="M0.5 0v9L5.5 4.5z" fill="#505050"/></svg>
<div class="abs" style="left:530px;top:45px;width:1390px;height:65px;background:#eeeeee;border-bottom:1px solid #c3c3c3"></div>
<div class="t" style="left:1322px;top:55px;font-size:13px;color:#111">Pfad:</div>
<div class="t" style="left:1357px;top:55px;font-size:13px;letter-spacing:0.38px;color:#111">.../Menü/Media/Vereinsleben/Fotoalbum/Fotoalbum 2018/</div>
<div class="dh" style="left:1357px;top:67px;width:352px;background-image:linear-gradient(90deg,#222 50%,transparent 50%)"></div>
<svg class="abs" style="left:1712px;top:54px;overflow:visible" width="16" height="16" viewBox="0 0 16 16"><path d="M3.5 0.5h7l4 4v11h-11z" fill="#efefef" stroke="#8a8a8a"/><path d="M10.5 0.5v4h4" fill="#fff" stroke="#8a8a8a"/><circle cx="11.3" cy="10.7" r="5.4" fill="#c83c3c"/><rect x="8.8" y="9.9" width="5" height="1.7" fill="#fff"/></svg>
<div class="t" style="left:1734px;top:55px;font-size:13px;font-weight:bold;letter-spacing:1px;color:#111">Sommerfest 2018 [454]</div>
<div class="btn" style="left:554px;top:79px;width:26px;height:26px"><svg width="24" height="24" viewBox="0 0 24 24" style="position:absolute;left:0;top:0"><path d="M8.5 8.5l7 7M15.5 8.5l-7 7" stroke="#111" stroke-width="2.2"/></svg></div>
<div class="btn" style="left:585px;top:79px;width:110px;height:26px"></div>
<div class="abs" style="left:669px;top:80px;width:1px;height:24px;background:#c4c4c4"></div>
<svg class="abs" style="left:590px;top:84px" width="16" height="16" viewBox="0 0 16 16"><path d="M1.5 1.5h10l3 3v10h-13z" fill="none" stroke="#222" stroke-width="1.3"/><rect x="4" y="1.5" width="6" height="4" fill="none" stroke="#222" stroke-width="1.2"/><rect x="4" y="9" width="8" height="5.5" fill="none" stroke="#222" stroke-width="1.2"/><rect x="5" y="2" width="1.6" height="3" fill="#222"/></svg>
<div class="t" style="left:610px;top:86px;font-size:12px;letter-spacing:0.1px;color:#333">Speichern</div>
<svg class="abs" style="left:678px;top:91px" width="8" height="4" viewBox="0 0 8 4"><path d="M0 0h8L4 4z" fill="#333"/></svg>
<div class="btn" style="left:700px;top:79px;width:26px;height:26px"><svg width="24" height="24" viewBox="0 0 24 24" style="position:absolute;left:0;top:0"><path d="M5.8 7.6H18.2" stroke="#000" stroke-width="1.3"/><path d="M9.4 7.4V6.2Q9.4 5.4 10.2 5.4H13.8Q14.6 5.4 14.6 6.2V7.4" fill="none" stroke="#000" stroke-width="1.2"/><path d="M7.6 8V17.6Q7.6 18.6 8.6 18.6H15.4Q16.4 18.6 16.4 17.6V8" fill="none" stroke="#000" stroke-width="1.3"/><path d="M10.6 9.6V16.6M13.4 9.6V16.6" stroke="#000" stroke-width="1.1" stroke-linecap="round"/></svg></div>
<div class="btn" style="left:1839px;top:79px;width:26px;height:26px"><svg width="24" height="24" viewBox="0 0 24 24" style="position:absolute;left:0;top:0"><path d="M13.8 8.9H6.9V16.1H17.1V12.2" fill="none" stroke="#000" stroke-width="1.35"/><path d="M14 11.8L18.2 7.6" stroke="#000" stroke-width="1.3"/><path d="M15.6 5.9H20.1V10.4Z" fill="#000"/></svg></div>
<div class="btn" style="left:1870px;top:79px;width:26px;height:26px"><svg width="24" height="24" viewBox="0 0 24 24" style="position:absolute;left:0;top:0"><path d="M12 4.6l2.4 5 5.4.6-4 3.7 1.1 5.4L12 16.6l-4.9 2.7 1.1-5.4-4-3.7 5.4-.6z" fill="none" stroke="#111" stroke-width="1.2" stroke-linejoin="round"/></svg></div>
<div class="t" style="left:554px;top:136px;font-size:26px;letter-spacing:3.4px;color:#111;-webkit-text-stroke:0.6px #111;transform-origin:0 0;transform:scaleX(0.72)">Seite "Sommerfest 2018" bearbeiten</div>
<div class="abs" style="left:554px;top:185px;width:1342px;height:32px;background:#ededed;border-bottom:1px solid #cfcfcf"></div>
<div class="abs" style="left:554px;top:185px;width:85px;height:32px;background:#fafafa;border:1px solid #cfcfcf;border-bottom:none;border-radius:2px 2px 0 0"></div>
<div class="t" style="left:567px;top:194px;font-size:13px;letter-spacing:0.35px;color:#333">Allgemein</div>
<div class="t" style="left:654px;top:194px;font-size:13px;letter-spacing:0.35px;color:#444">Metadaten</div>
<div class="t" style="left:745px;top:194px;font-size:13px;letter-spacing:0.25px;color:#444">Erscheinungsbild</div>
<div class="t" style="left:875px;top:194px;font-size:13px;letter-spacing:0.35px;color:#444">Verhalten</div>
<div class="t" style="left:960px;top:194px;font-size:13px;letter-spacing:0.1px;color:#444">Ressourcen</div>
<div class="t" style="left:1057px;top:194px;font-size:13px;letter-spacing:0.65px;color:#444">Zugriff</div>
<div class="t" style="left:1125px;top:194px;font-size:13px;letter-spacing:0.3px;color:#444">Search</div>
<div class="abs" style="left:554px;top:216px;width:1342px;height:750px;background:#fafafa;border:1px solid #cfcfcf;border-top:none"></div>
<div class="abs" style="left:555px;top:349px;width:1340px;height:1px;background:#d7d7d7"></div>
<div class="abs" style="left:555px;top:658px;width:1340px;height:1px;background:#d7d7d7"></div>
<div class="abs" style="left:555px;top:756px;width:1340px;height:1px;background:#d7d7d7"></div>
<div class="sec" style="left:567px;top:233px">Seite</div>
<div class="lbl" style="left:567px;top:261px">Typ</div>
<div class="abs" style="left:567px;top:290px;width:152px;height:32px;background:#fefefe;border:1px solid #bbb;border-radius:2px"></div>
<div class="abs" style="left:568px;top:291px;width:32px;height:30px;background:#efefef;border-right:1px solid #bbb"></div>
<svg width="16" height="16" viewBox="0 0 16 16" style="overflow:visible;position:absolute;left:576px;top:298px"><path d="M2.5 0.5h7l4 4v11h-11z" fill="#efefef" stroke="#8f8f8f"/><path d="M9.8 5H13V11z" fill="#c2c2c2"/><path d="M9.5 0.5v4h4z" fill="#fff" stroke="#8f8f8f" stroke-linejoin="round"/></svg>
<div class="itx" style="left:606px;top:299px;color:#333">Standard</div>
<svg class="abs" style="left:701px;top:302px" width="10" height="8" viewBox="0 0 10 8"><path d="M1 1.5l4 4 4-4" fill="none" stroke="#111" stroke-width="2"/></svg>
<div class="sec" style="left:567px;top:366px">Titel</div>
<div class="lbl" style="left:567px;top:394px">Seitentitel</div>
<div class="inp" style="left:567px;top:423px;width:799px;height:32px"></div>
<div class="itx" style="left:574px;top:433px">Sommerfest 2018</div>
<svg class="abs" style="left:1344px;top:434px" width="9" height="9" viewBox="0 0 9 9"><path d="M1 1l7 7M8 1l-7 7" stroke="#b5b5b5" stroke-width="1.8"/></svg>
<div class="lbl" style="left:567px;top:482px">Alternativer Navigationstitel</div>
<div class="inp blue" style="left:567px;top:511px;width:799px;height:32px"></div>
<div class="itx" style="left:574px;top:521px">Sommerfest</div>
<svg class="abs" style="left:1344px;top:522px" width="9" height="9" viewBox="0 0 9 9"><path d="M1 1l7 7M8 1l-7 7" stroke="#b5b5b5" stroke-width="1.8"/></svg>
<div class="lbl" style="left:567px;top:570px">Untertitel</div>
<div class="inp" style="left:567px;top:599px;width:799px;height:32px"></div>
<div class="lbl" style="left:567px;top:677px">Aufmacher</div>
<div class="inp blue" style="left:567px;top:706px;width:475px;height:32px"></div>
<div class="itx" style="left:574px;top:716px">Hallo, Sommer</div>
<svg class="abs" style="left:1020px;top:717px" width="9" height="9" viewBox="0 0 9 9"><path d="M1 1l7 7M8 1l-7 7" stroke="#b5b5b5" stroke-width="1.8"/></svg>
<div class="sec" style="left:567px;top:773px;letter-spacing:0.2px">Sprechende URL</div>
<div class="lbl" style="left:567px;top:801px">Pfadsegment für untergeordnete Seiten</div>
<div class="inp" style="left:567px;top:830px;width:475px;height:32px"></div>
<div class="lbl" style="left:567px;top:889px">Nicht in sprechende URL aufnehmen</div>
<div class="abs" style="left:567px;top:923px;width:12px;height:12px;border:1px solid #aaa;border-radius:2px;background:linear-gradient(#f4f4f4,#dedede)"></div>
<div class="itx" style="left:587px;top:921px;color:#222;letter-spacing:0.55px">Aktiviert</div>
<div class="lbl" style="left:1240px;top:889px">Den gesamten Pfad überschreiben</div>
<div class="abs" style="left:1240px;top:923px;width:12px;height:12px;border:1px solid #aaa;border-radius:2px;background:linear-gradient(#f4f4f4,#dedede)"></div>
<div class="itx" style="left:1260px;top:921px;color:#222;letter-spacing:0.55px">Aktiviert</div>
<svg class="abs" style="left:1803px;top:972px;overflow:visible" width="16" height="16" viewBox="0 0 16 16"><path d="M3.5 0.5h7l4 4v11h-11z" fill="#efefef" stroke="#8a8a8a"/><path d="M10.5 0.5v4h4" fill="#fff" stroke="#8a8a8a"/><circle cx="11.5" cy="10.6" r="5.5" fill="#c83c3c"/><rect x="9" y="9.8" width="5" height="1.7" fill="#fff"/></svg>
<div class="t" style="left:1824px;top:973px;font-size:13px;font-weight:bold;letter-spacing:0.5px;color:#333">Seite</div>
<div class="t" style="left:1863px;top:973px;font-size:13px;letter-spacing:0.5px;color:#555">[454]</div>
<svg class="abs" style="left:0;top:0" width="1920" height="1058"><defs><filter id="sh" x="-20%" y="-20%" width="140%" height="140%"><feGaussianBlur in="SourceAlpha" stdDeviation="1.3"/><feOffset dx="2" dy="2"/><feComponentTransfer><feFuncA type="linear" slope="0.9"/></feComponentTransfer><feMerge><feMergeNode/><feMergeNode in="SourceGraphic"/></feMerge></filter></defs><g filter="url(#sh)"><path d="M481.06 526.58 L557.41 467.17 L558.16 472.11 L564.22 456.13 L547.34 458.72 L551.93 460.29 L476.94 521.42Z" fill="#ff0000" stroke="#ff0000" stroke-width="1.8" stroke-linejoin="round"/><circle cx="479.00" cy="524.00" r="3.90" fill="#ff0000"/><path d="M732.93 582.32 L669.06 534.91 L673.67 533.34 L656.51 531.29 L663.40 546.61 L663.91 542.04 L729.07 587.68Z" fill="#ff0000" stroke="#ff0000" stroke-width="1.8" stroke-linejoin="round"/><circle cx="731.00" cy="585.00" r="3.90" fill="#ff0000"/><path d="M504.86 805.08 L559.39 739.52 L561.24 743.97 L563.55 727.36 L546.89 733.05 L552.56 733.98 L499.74 800.92Z" fill="#ff0000" stroke="#ff0000" stroke-width="1.8" stroke-linejoin="round"/><circle cx="502.30" cy="803.00" r="3.90" fill="#ff0000"/></g></svg>
</body></html>
